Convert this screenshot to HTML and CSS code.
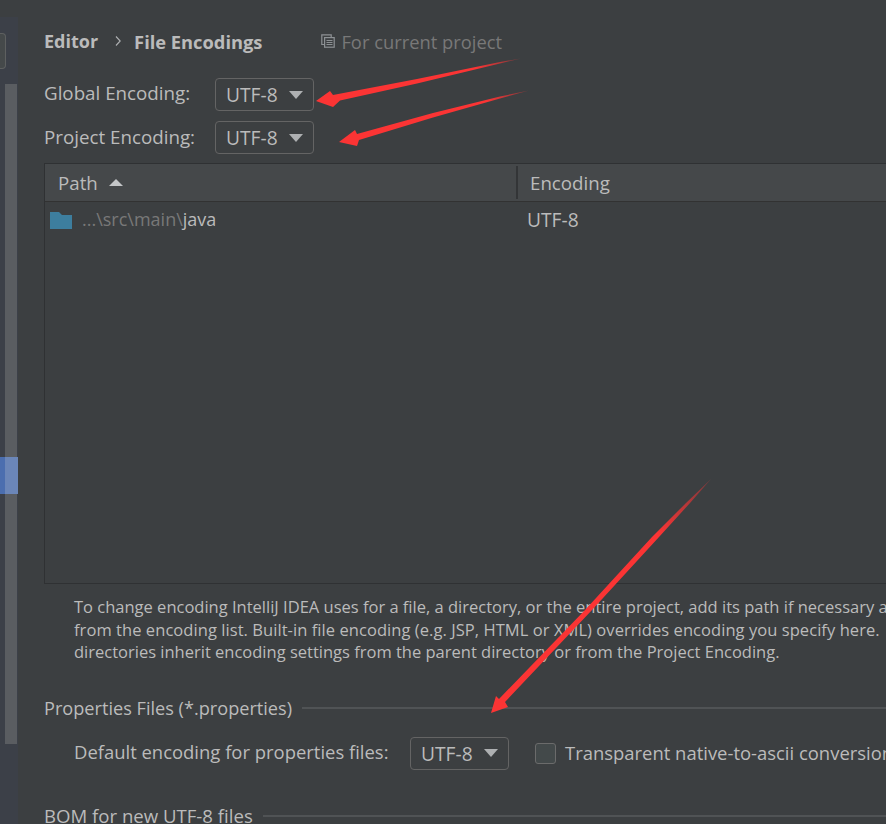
FILE: index.html
```html
<!DOCTYPE html>
<html lang="en">
<head>
<meta charset="utf-8">
<title>File Encodings</title>
<link rel="stylesheet" href="styles.css">
</head>
<body>
<div class="window">
  <aside class="sidebar">
    <div class="search"></div>
    <div class="track">
      <div class="thumb"></div>
    </div>
    <div class="selection"></div>
  </aside>
  <main class="panel">
    <header class="crumbs">
      <span class="crumb">Editor</span>
      <svg class="chevron" width="6" height="10" viewBox="0 0 6 10"><path d="M1 .5 5.2 5 1 9.5" fill="none" stroke="#afb1b3" stroke-width="1.1"/></svg>
      <span class="crumb crumb-file">File Encodings</span>
      <svg class="scope-icon" width="14" height="14" viewBox="0 0 14 14"><path d="M3.5 10.5H.8V.8h9.4v2.7" fill="none" stroke="#8d9194" stroke-width="1.2"/><rect x="3.6" y="3.6" width="9.6" height="9.6" fill="none" stroke="#8d9194" stroke-width="1.2"/><path d="M5.5 6.5h6M5.5 8.5h6M5.5 10.5h6" stroke="#8d9194"/></svg>
      <span class="scope">For current project</span>
    </header>
    <div class="field first">
      <label class="field-label">Global Encoding:</label>
      <div class="combo"><span>UTF-8</span><i class="caret"></i></div>
    </div>
    <div class="field second">
      <label class="field-label">Project Encoding:</label>
      <div class="combo"><span>UTF-8</span><i class="caret"></i></div>
    </div>
    <section class="table">
      <div class="thead">
        <div class="th th-path">Path<i class="sort"></i></div>
        <div class="th th-enc">Encoding</div>
      </div>
      <div class="row">
        <div class="cell-path">
          <svg class="folder" width="22" height="17" viewBox="0 0 22 17"><path d="M0 0h9l3 3h10v14H0z" fill="#3d7e9e"/></svg>
          <span class="dim">...\src\main\</span><span>java</span>
        </div>
        <div class="cell-enc">UTF-8</div>
      </div>
    </section>
    <div class="note">
      <p>To change encoding IntelliJ IDEA uses for a file, a directory, or the entire project, add its path if necessary and</p>
      <p class="note-wide">from the encoding list. Built-in file encoding (e.g. JSP, HTML or XML) overrides encoding you specify here.</p>
      <p>directories inherit encoding settings from the parent directory or from the Project Encoding.</p>
    </div>
    <div class="group-title props"><span>Properties Files (*.properties)</span><i class="rule"></i></div>
    <div class="prop-row">
      <label class="field-label prop-label">Default encoding for properties files:</label>
      <div class="combo"><span>UTF-8</span><i class="caret"></i></div>
      <i class="check"></i>
      <span class="check-label">Transparent native-to-ascii conversion</span>
    </div>
    <div class="group-title bom"><span>BOM for new UTF-8 files</span><i class="rule"></i></div>
  </main>
  <svg class="arrows" width="886" height="824" viewBox="0 0 886 824">
    <defs>
      <linearGradient id="a1" gradientUnits="userSpaceOnUse" x1="340" y1="98" x2="521" y2="59"><stop offset=".75" stop-color="#fb3434"/><stop offset="1" stop-color="#7a3a3c"/></linearGradient>
      <linearGradient id="a2" gradientUnits="userSpaceOnUse" x1="360" y1="137" x2="529" y2="91"><stop offset=".75" stop-color="#fb3434"/><stop offset="1" stop-color="#7a3a3c"/></linearGradient>
      <linearGradient id="a3" gradientUnits="userSpaceOnUse" x1="500" y1="702" x2="711" y2="479"><stop offset=".75" stop-color="#fb3434"/><stop offset="1" stop-color="#7a3a3c"/></linearGradient>
    </defs>
    <polygon fill="url(#a1)" points="316,101 330,91 333,95 417,79 500,62 521,58.5 500,63.5 417,83.5 340,100.5 333,107"/>
    <polygon fill="url(#a2)" points="339,142 355,130 357,134 433,113 500,96.5 529,90.5 500,98.5 433,117.5 359,140 357,146"/>
    <polygon fill="url(#a3)" points="491,713 496,696 499,699 585,610 652,537 686,503 711,479 690,503 659,537 592,610 505,702 508,707"/>
  </svg>
</div>
</body>
</html>
```
FILE: styles.css
```css
* { box-sizing: border-box; }
html, body { margin: 0; height: 100%; overflow: hidden; }
body {
  background: #3c3f41;
  color: #bbbbbb;
  font-family: "Open Sans", "Noto Sans", "Liberation Sans", sans-serif;
  font-size: 18.45px;
}
.window { position: relative; display: flex; width: 886px; height: 824px; overflow: hidden; }

.sidebar { position: relative; width: 18px; flex: none; margin-top: 17px; background: #3c4048; }
.search { width: 6px; height: 36px; margin-top: 16px; border: 1px solid #5e6060; border-left: 0; border-radius: 0 4px 4px 0; background: #45494a; }
.track { margin-top: 15px; padding-left: 5px; }
.thumb { width: 12px; height: 660px; background: #5a5d61; }
.selection { position: absolute; left: 0; right: 0; top: 440px; height: 37px; background: linear-gradient(90deg, #4b6eaf 5px, #6b86b8 5px); }

.panel { flex: 1; min-width: 0; padding-left: 26px; }

.crumbs { display: flex; align-items: center; height: 30px; margin-top: 26px; white-space: nowrap; }
.crumb { font-weight: 700; font-size: 18px; }
.crumb-file { font-size: 18.3px; }
.chevron { margin: 0 13px 0 17px; }
.scope-icon { margin-left: 59px; }
.scope { margin-left: 6px; color: #787878; font-size: 18.35px; }

.field { display: flex; align-items: center; height: 33px; }
.field.first { margin-top: 22px; }
.field.second { margin-top: 10px; }
.field-label { width: 171px; flex: none; white-space: nowrap; font-size: 18.75px; padding-bottom: 3px; }
.field.first .field-label { padding-bottom: 5px; }
.combo { display: flex; align-items: center; justify-content: space-between; flex: none; width: 99px; height: 33px; padding: 0 10px; border: 1px solid #646464; border-radius: 4px; background: #3c3f41; font-size: 19.2px; }
.caret { width: 0; height: 0; border: 7px solid transparent; border-top: 8px solid #aeb0b2; border-bottom: 0; }

.table { width: 900px; height: 421px; margin-top: 9px; border: 1px solid #2f3133; border-right: 0; }
.thead { display: flex; height: 38px; background: #45484a; border-bottom: 1px solid #323232; }
.th { display: flex; align-items: center; height: 33px; margin-top: 2px; font-size: 18.7px; }
.th-path { width: 473px; padding-left: 13px; border-right: 2px solid #333537; }
.th-enc { padding-left: 12px; }
.sort { margin-left: 11px; width: 0; height: 0; border: 7px solid transparent; border-bottom: 7px solid #c4c6c8; border-top: 0; }
.row { display: flex; align-items: center; height: 36px; }
.cell-path { display: flex; align-items: center; width: 482px; padding-left: 5px; white-space: nowrap; font-size: 18px; }
.cell-path span { position: relative; top: -1px; }
.cell-enc { font-size: 19.2px; position: relative; top: -1px; }
.folder { margin-right: 10px; }
.dim { color: #787878; }

.note { margin: 12px 0 0 30px; font-size: 16.5px; line-height: 22.5px; white-space: nowrap; }
.note p { margin: 0; }
.note .note-wide { letter-spacing: .06px; }

.group-title { display: flex; align-items: center; white-space: nowrap; height: 24px; }
.group-title.props { margin-top: 32px; font-size: 18.15px; }
.group-title.bom { margin-top: 34px; font-size: 18.6px; }
.rule { flex: 1; height: 2px; margin-left: 10px; background: #505355; }

.prop-row { display: flex; align-items: center; height: 33px; margin: 17px 0 0 30px; white-space: nowrap; }
.prop-label { width: 336px; font-size: 18.45px; }
.check { flex: none; width: 21px; height: 21px; margin-left: 26px; border: 1px solid #6b6b6b; border-radius: 3px; background: #43494a; }
.check-label { margin-left: 9px; padding-bottom: 2px; }

.arrows { position: absolute; left: 0; top: 0; pointer-events: none; }
```
